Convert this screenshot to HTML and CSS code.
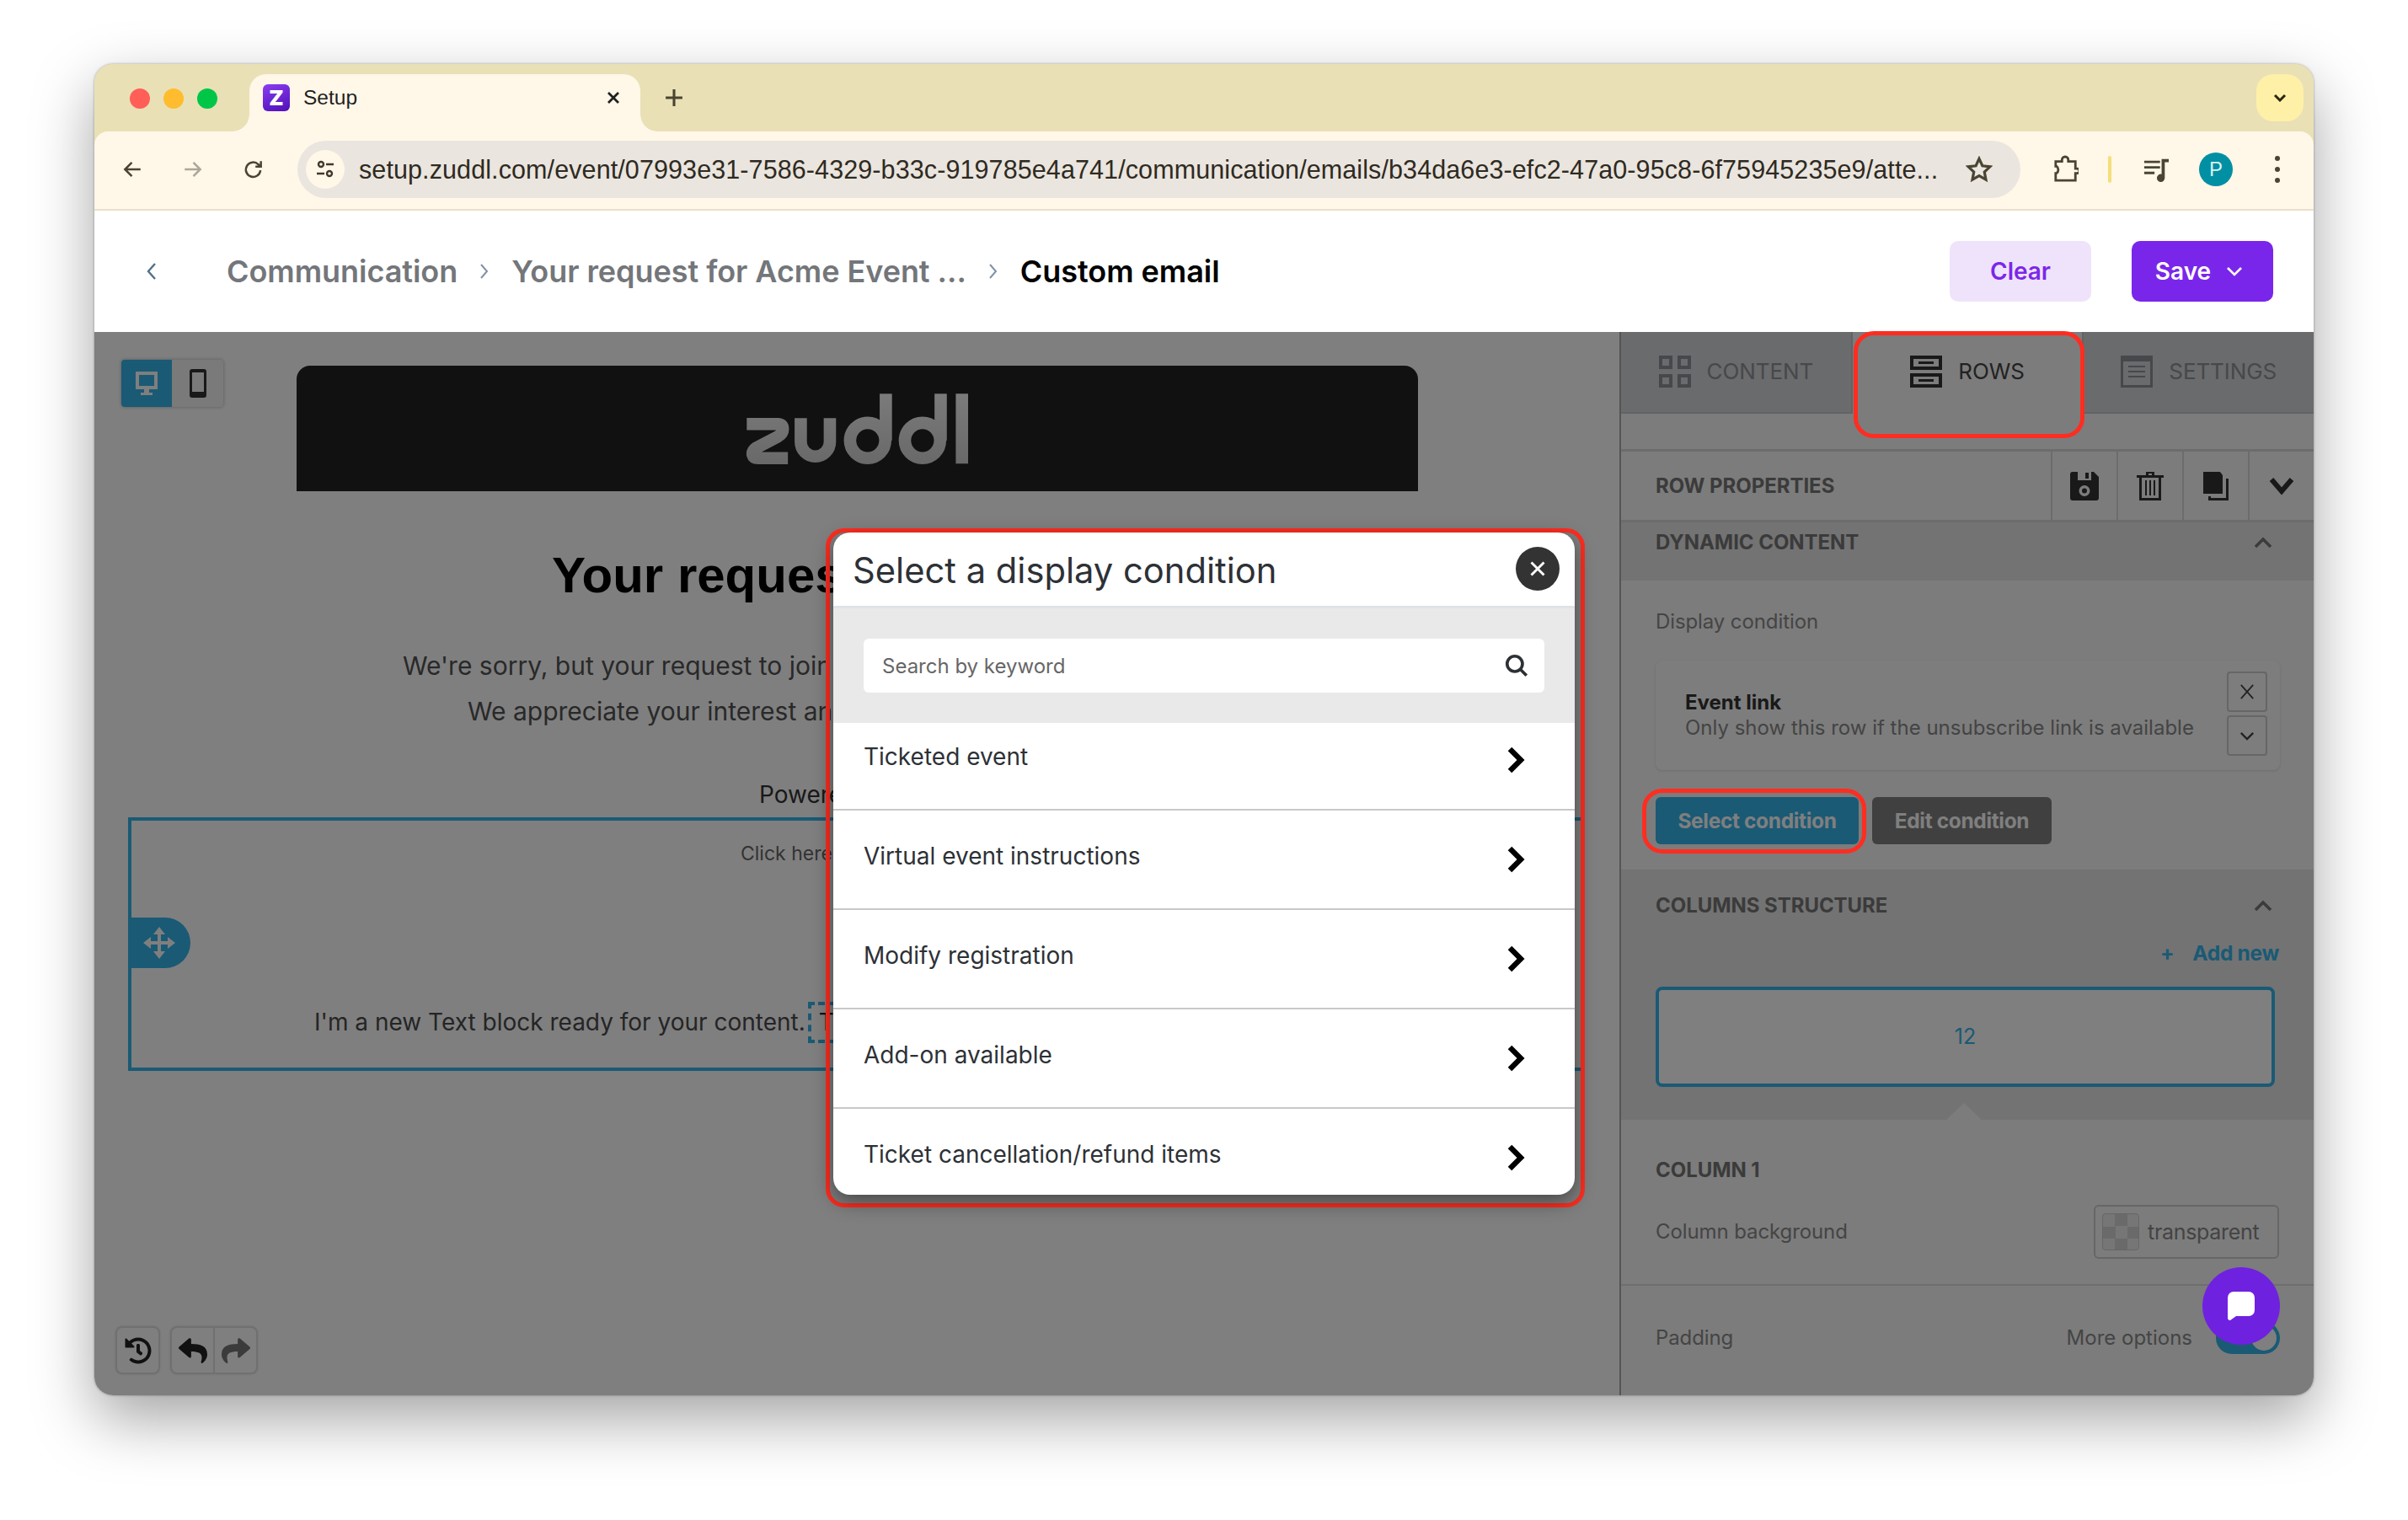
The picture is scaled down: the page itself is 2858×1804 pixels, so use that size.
FILE: index.html
```html
<!DOCTYPE html>
<html lang="en">
<head>
<meta charset="utf-8">
<title>Setup</title>
<link rel="stylesheet" href="styles.css">
</head>
<body>
<div class="window">
  <div class="tabstrip">
    <div class="lights"><i class="light red"></i><i class="light amber"></i><i class="light green"></i></div>
    <div class="tab">
      <span class="favicon">Z</span>
      <span class="tab-title">Setup</span>
      <svg class="tab-close" viewBox="0 0 16 16"><path d="M2 2l12 12M14 2L2 14"/></svg>
    </div>
    <svg class="new-tab" viewBox="0 0 20 20"><path d="M10 1v18M1 10h18"/></svg>
    <div class="tab-search"><svg viewBox="0 0 16 10"><path d="M2 2l6 6 6-6"/></svg></div>
  </div>
  <div class="toolbar">
    <svg class="nav-icon" viewBox="0 0 24 24"><path d="M21 12H4M11.500 4.500L4 12l7.500 7.500"/></svg>
    <svg class="nav-icon muted" viewBox="0 0 24 24"><path d="M3 12h17M12.500 4.500L20 12l-7.500 7.500"/></svg>
    <svg class="nav-icon" viewBox="0 0 24 24"><path d="M19.500 13a8 8 0 1 1-2.400-6.500L20 9M20 3v6h-6"/></svg>
    <div class="omnibox">
      <span class="site-btn"><svg viewBox="0 0 24 24"><circle cx="7" cy="6" r="3"/><path d="M13 6h9M2 17h9"/><circle cx="17" cy="17" r="3"/></svg></span>
      <span class="url">setup.zuddl.com/event/07993e31-7586-4329-b33c-919785e4a741/communication/emails/b34da6e3-efc2-47a0-95c8-6f75945235e9/atte...</span>
      <svg class="star" viewBox="0 0 24 24"><path d="M12 2.500l2.900 6.300 6.800.8-5 4.700 1.300 6.800-6-3.400-6 3.400 1.300-6.800-5-4.700 6.800-.8z"/></svg>
    </div>
    <svg class="ext-icon" viewBox="0 0 32 34"><path d="M3 7h8V5a4 4 0 0 1 8 0v2h9v9h2a3 3 0 0 1 0 6h-2v9H3v-9h1a5.500 5.500 0 0 0 0-9H3z"/></svg>
    <i class="tool-sep"></i>
    <svg class="queue-icon" viewBox="0 0 32 32"><path d="M1 5h20v3H1zM1 12h20v3H1zM1 19h13v3H1zM23 3h9v4h-5v20a5 5 0 1 1-4-5z"/></svg>
    <span class="avatar">P</span>
    <span class="kebab"><i></i><i></i><i></i></span>
  </div>
  <header class="pagebar">
    <svg class="crumb-back" viewBox="0 0 14 24"><path d="M11 3l-8 9 8 9"/></svg>
    <nav class="crumbs">
      <span class="crumb">Communication</span>
      <svg class="crumb-sep" viewBox="0 0 12 20"><path d="M2 2l7 8-7 8"/></svg>
      <span class="crumb">Your request for Acme Event ...</span>
      <svg class="crumb-sep" viewBox="0 0 12 20"><path d="M2 2l7 8-7 8"/></svg>
      <span class="crumb current">Custom email</span>
    </nav>
    <button class="btn-clear">Clear</button>
    <button class="btn-save">Save<svg viewBox="0 0 20 12"><path d="M2 2l8 8 8-8"/></svg></button>
  </header>

  <main class="editor">
    <section class="canvas">
      <div class="device-toggle">
        <span class="device on"><svg viewBox="0 0 32 32"><path d="M3 2h26v21H3zM7 6v13h18V6zM13 23h6v4h4v3H9v-3h4z" fill-rule="evenodd"/></svg></span>
        <span class="device"><svg viewBox="0 0 20 34"><path d="M3 0h14a3 3 0 0 1 3 3v28a3 3 0 0 1-3 3H3a3 3 0 0 1-3-3V3a3 3 0 0 1 3-3zM3 4v23h14V4z" fill-rule="evenodd"/></svg></span>
      </div>
      <div class="email-logo">
        <svg class="logo-mark" viewBox="63 65 817 277" role="img" aria-label="zuddl">
          <defs><linearGradient id="logoFade" gradientUnits="userSpaceOnUse" x1="0" y1="78" x2="0" y2="330"><stop offset="0" stop-color="#f6f6f6"/><stop offset="1" stop-color="#d2d2d2"/></linearGradient></defs>
          <g fill="none" stroke="url(#logoFade)" stroke-width="44">
            <path d="M75 186H186Q204 186 204 204Q204 220 186 231L108 272Q94 282 96 296Q99 308 116 308H222"/>
            <path d="M268 165V250A52 52 0 0 0 372 250V165"/>
            <circle cx="507" cy="245" r="63"/>
            <path d="M572 78V245"/>
            <circle cx="703" cy="245" r="63"/>
            <path d="M768 78V245"/>
            <path d="M844 78V328"/>
          </g>
        </svg>
      </div>
      <h1 class="email-title">Your request</h1>
      <p class="email-text line-a">We're sorry, but your request to join</p>
      <p class="email-text line-b">We appreciate your interest and</p>
      <p class="email-text line-c">Powered</p>
      <div class="selected-row">
        <span class="move-handle"><svg viewBox="0 0 40 40"><path d="M20 1l7 9h-5v8h8v-5l9 7-9 7v-5h-8v8h5l-7 9-7-9h5v-8h-8v5l-9-7 9-7v5h8v-8h-5z"/></svg></span>
        <p class="row-link">Click here</p>
        <p class="row-copy">I'm a new Text block ready for your content.<span class="dashed">Ti</span></p>
      </div>
      <div class="history-tools">
        <span class="tool-btn"><svg viewBox="0 0 512 512"><path d="M504 255.531c.253 136.64-111.18 248.372-247.82 248.468-59.015.042-113.223-20.53-155.822-54.911-11.077-8.94-11.905-25.541-1.839-35.607l11.267-11.267c8.609-8.609 22.353-9.551 31.891-1.984C173.062 425.135 212.781 440 256 440c101.705 0 184-82.311 184-184 0-101.705-82.311-184-184-184-48.814 0-93.149 18.969-126.068 49.932l50.754 50.754c10.08 10.08 2.941 27.314-11.313 27.314H24c-8.837 0-16-7.163-16-16V38.627c0-14.254 17.234-21.393 27.314-11.314l49.372 49.372C129.209 34.136 189.552 8 256 8c136.81 0 247.747 110.78 248 247.531zm-180.912 78.784l9.823-12.63c8.138-10.463 6.253-25.542-4.21-33.679L288 256.349V152c0-13.255-10.745-24-24-24h-16c-13.255 0-24 10.745-24 24v135.651l65.409 50.874c10.463 8.137 25.541 6.253 33.679-4.21z"/></svg></span>
        <span class="tool-group">
          <span class="tool-half"><svg viewBox="0 0 512 512"><path d="M8.309 189.836L184.313 37.851C199.719 24.546 224 35.347 224 56.015v80.053c160.629 1.839 288 34.032 288 186.258 0 61.441-39.581 122.309-83.333 154.132-13.653 9.931-33.111-2.533-28.077-18.631 45.344-145.012-21.507-183.51-176.59-185.742V360c0 20.7-24.3 31.453-39.687 18.164l-176.004-152c-11.071-9.562-11.086-26.753 0-36.328z"/></svg></span>
          <span class="tool-half dim"><svg viewBox="0 0 512 512"><path transform="matrix(-1 0 0 1 512 0)" d="M8.309 189.836L184.313 37.851C199.719 24.546 224 35.347 224 56.015v80.053c160.629 1.839 288 34.032 288 186.258 0 61.441-39.581 122.309-83.333 154.132-13.653 9.931-33.111-2.533-28.077-18.631 45.344-145.012-21.507-183.51-176.59-185.742V360c0 20.7-24.3 31.453-39.687 18.164l-176.004-152c-11.071-9.562-11.086-26.753 0-36.328z"/></svg></span>
        </span>
      </div>
    </section>

    <aside class="panel">
      <div class="panel-tabs">
        <div class="ptab">
          <svg viewBox="0 0 38 38"><path d="M0 0h16v16H0zM4 4v8h8V4zM22 0h16v16H22zM26 4v8h8V4zM0 22h16v16H0zM4 26v8h8v-8zM22 22h16v16H22zM26 26v8h8v-8z" fill-rule="evenodd"/></svg>
          <span>CONTENT</span>
        </div>
        <div class="ptab active">
          <svg viewBox="0 0 38 38"><path d="M0 0h38v17H0zM4 4v9h30V4zM0 21h38v17H0zM4 25v9h30v-9zM10 7h18v3H10zM10 28h18v3H10z" fill-rule="evenodd"/></svg>
          <span>ROWS</span>
        </div>
        <div class="ptab">
          <svg viewBox="0 0 38 38"><path d="M0 0h38v38H0zM3 7v28h32V7zM9 12h20v2H9zM9 18h20v2H9zM9 24h20v2H9z" fill-rule="evenodd"/></svg>
          <span>SETTINGS</span>
        </div>
      </div>
      <div class="props-bar">
        <span class="props-title">ROW PROPERTIES</span>
        <span class="prop-btn"><svg viewBox="0 0 34 34"><path d="M3 0h6v10h16V0h3l6 6v25a3 3 0 0 1-3 3H3a3 3 0 0 1-3-3V3a3 3 0 0 1 3-3zM17 16a6.500 6.500 0 1 0 0 13 6.500 6.500 0 0 0 0-13zm0 3.500a3 3 0 1 1 0 6 3 3 0 0 1 0-6zM18 1h4v7h-4z" fill-rule="evenodd"/></svg></span>
        <span class="prop-btn"><svg viewBox="0 0 34 34"><path d="M12 0h10v4h11v3h-3v27H4V7H1V4h11zM15 2v2h4V2zM7 7v24h20V7zM11 10h2v18h-2zM16 10h2v18h-2zM21 10h2v18h-2z" fill-rule="evenodd"/></svg></span>
        <span class="prop-btn"><svg viewBox="0 0 34 34"><path d="M2 0h20l3 4v22H2zM28 8h4v26H8v-5h3v2h18V8z"/></svg></span>
        <span class="prop-btn plain"><svg class="thick" viewBox="0 0 32 24"><path d="M4 4l12 14L28 4"/></svg></span>
      </div>
      <div class="band band-dynamic">
        <span class="band-title">DYNAMIC CONTENT</span>
        <svg class="band-chevron" viewBox="0 0 24 14"><path d="M3 12l9-9 9 9"/></svg>
      </div>
      <div class="dynamic-body">
        <p class="field-label">Display condition</p>
        <div class="condition-card">
          <div class="condition-text">
            <strong>Event link</strong>
            <span>Only show this row if the unsubscribe link is available</span>
          </div>
          <div class="condition-btns">
            <span class="mini-btn"><svg viewBox="0 0 20 24"><path d="M2 3l16 18M18 3L2 21"/></svg></span>
            <span class="mini-btn"><svg viewBox="0 0 20 12"><path d="M2 2l8 8 8-8"/></svg></span>
          </div>
        </div>
        <div class="condition-actions">
          <button class="btn-select">Select condition</button>
          <button class="btn-edit">Edit condition</button>
        </div>
      </div>
      <div class="band band-columns">
        <div class="band-head">
          <span class="band-title">COLUMNS STRUCTURE</span>
          <svg class="band-chevron" viewBox="0 0 24 14"><path d="M3 12l9-9 9 9"/></svg>
        </div>
        <div class="add-new"><span class="plus">+</span><span>Add new</span></div>
        <div class="col-box">12</div>
        <i class="col-notch"></i>
      </div>
      <div class="column-props">
        <p class="band-title col-title">COLUMN 1</p>
        <div class="prop-row">
          <span class="field-label">Column background</span>
          <span class="color-field"><i class="swatch"></i><span>transparent</span></span>
        </div>
      </div>
      <div class="padding-row">
        <span class="field-label">Padding</span>
        <span class="more-options">More options</span>
        <i class="switch"></i>
      </div>
    </aside>
    <div class="scrim"></div>
    <i class="mark mark-rows"></i>
    <i class="mark mark-select"></i>
    <i class="mark mark-modal"></i>
    <div class="modal">
      <div class="modal-head">
        <h2>Select a display condition</h2>
        <span class="modal-close"><svg viewBox="0 0 16 16"><path d="M3 3l10 10M13 3L3 13"/></svg></span>
      </div>
      <div class="modal-search">
        <div class="search-box">
          <span>Search by keyword</span>
          <svg viewBox="0 0 28 28"><circle cx="12" cy="12" r="8.500"/><path d="M18 18l7 7"/></svg>
        </div>
      </div>
      <ul class="modal-list">
        <li><span>Ticketed event</span><svg viewBox="0 0 22 32"><path d="M4 3l13 13L4 29"/></svg></li>
        <li><span>Virtual event instructions</span><svg viewBox="0 0 22 32"><path d="M4 3l13 13L4 29"/></svg></li>
        <li><span>Modify registration</span><svg viewBox="0 0 22 32"><path d="M4 3l13 13L4 29"/></svg></li>
        <li><span>Add-on available</span><svg viewBox="0 0 22 32"><path d="M4 3l13 13L4 29"/></svg></li>
        <li><span>Ticket cancellation/refund items</span><svg viewBox="0 0 22 32"><path d="M4 3l13 13L4 29"/></svg></li>
      </ul>
    </div>
    <span class="chat-bubble"><svg viewBox="0 0 34 36"><path d="M8 1h18a7 7 0 0 1 7 7v15a7 7 0 0 1-7 7H11l-7 5a3 3 0 0 1-3-3V8a7 7 0 0 1 7-7z"/></svg></span>
  </main>
</div>
</body>
</html>
```
FILE: styles.css
```css
* { box-sizing: border-box; }
html, body { margin: 0; background: #fff; }
body { padding: 76px 112px 148px; font-family: "Inter", "Liberation Sans", sans-serif; width: 2858px; height: 1804px; overflow: hidden; }
p, h1, h2, ul { margin: 0; padding: 0; }
button { font-family: inherit; border: 0; }
svg { display: block; flex: none; }
i { display: block; }

.window { position: relative; width: 2634px; height: 1580px; border-radius: 22px; overflow: hidden; background: #e9e0b6; box-shadow: 0 28px 72px rgba(0,0,0,.36), 0 0 3px rgba(0,0,0,.35); display: flex; flex-direction: column; }

/* browser chrome */
.tabstrip { height: 80px; background: #e9e0b6; display: flex; align-items: flex-start; padding-left: 42px; flex: none; }
.lights { display: flex; gap: 16px; margin-top: 29px; }
.light { width: 24px; height: 24px; border-radius: 50%; }
.red { background: #ff5f57; }
.amber { background: #febc2e; }
.green { background: #00c648; }
.tab { margin: 12px 0 0 38px; width: 464px; height: 68px; background: #fff7e8; border-radius: 20px 20px 0 0; display: flex; align-items: flex-start; padding: 12px 24px 0 16px; position: relative; }
.tab::before, .tab::after { content: ""; position: absolute; bottom: 0; width: 20px; height: 20px; background: radial-gradient(circle at 0 0, #e9e0b6 19.5px, #fff7e8 20px); }
.tab::before { left: -20px; }
.tab::after { right: -20px; background: radial-gradient(circle at 100% 0, #e9e0b6 19.5px, #fff7e8 20px); }
.favicon { width: 32px; height: 32px; border-radius: 6px; background: linear-gradient(160deg, #8b3df0, #4f0fb8); color: #fff; font: 900 25px/32px "Inter", sans-serif; text-align: center; }
.tab-title { margin-left: 16px; font: 400 24.500px/32px "Liberation Sans", sans-serif; color: #1f1f1f; flex: 1; }
.tab-close { width: 16px; height: 16px; margin-top: 8px; fill: none; stroke: #1f1f1f; stroke-width: 2.800; }
.new-tab { width: 22px; height: 22px; margin: 29px 0 0 29px; fill: none; stroke: #4a4432; stroke-width: 2.800; }
.tab-search { margin: 12px 0 0 auto; margin-right: 12px; width: 56px; height: 56px; border-radius: 20px; background: #fff0a8; display: flex; align-items: center; justify-content: center; }
.tab-search svg { width: 16px; height: 10px; fill: none; stroke: #2c2810; stroke-width: 3; }

.toolbar { height: 94px; background: #fff7e8; border-bottom: 2px solid #e9e0cb; display: flex; align-items: center; padding: 0 0 2px 32px; flex: none; border-radius: 16px 16px 0 0; position: relative; }
.nav-icon { width: 26px; height: 26px; margin-right: 46px; fill: none; stroke: #4a4432; stroke-width: 2.300; }
.nav-icon.muted { stroke: #aaa69a; }
.omnibox { margin-left: -7px; width: 2045px; height: 68px; border-radius: 34px; background: #eae5de; display: flex; align-items: center; padding: 0 0 0 10px; }
.site-btn { width: 46px; height: 46px; border-radius: 50%; background: #fff7e8; display: flex; align-items: center; justify-content: center; flex: none; }
.site-btn svg { width: 24px; height: 24px; fill: none; stroke: #3f3a2e; stroke-width: 2.400; }
.url { margin-left: 17px; width: 1900px; flex: none; font: 400 30.500px/40px "Liberation Sans", sans-serif; color: #2e2a22; white-space: nowrap; letter-spacing: .1px; }
.star { width: 32px; height: 32px; margin-left: 7px; fill: none; stroke: #4a4432; stroke-width: 2.400; }
.ext-icon { width: 30px; height: 34px; margin-left: 39px; fill: none; stroke: #4a4432; stroke-width: 3; }
.tool-sep { width: 4px; height: 32px; background: #f4df7b; margin-left: 35px; border-radius: 2px; }
.queue-icon { width: 30px; height: 32px; margin-left: 38px; fill: #4a4432; }
.avatar { width: 40px; height: 40px; border-radius: 50%; background: #008fa3; color: #d9f3f5; font: 400 24px/40px "Liberation Sans", sans-serif; text-align: center; margin-left: 36px; }
.kebab { display: flex; flex-direction: column; gap: 7px; margin-left: 50px; }
.kebab i { width: 6px; height: 6px; border-radius: 50%; background: #4a4432; }

.pagebar { height: 144px; background: #fff; display: flex; align-items: center; padding: 0 48px 0 61px; flex: none; }
.crumb-back { width: 14px; height: 24px; fill: none; stroke: #52708a; stroke-width: 2.400; }
.crumbs { display: flex; align-items: center; margin-left: 82px; flex: 1; }
.crumb { font-size: 36px; font-weight: 600; color: #73767a; letter-spacing: -.05px; white-space: nowrap; }
.crumb.current { color: #000; }
.crumb-sep { width: 12px; height: 20px; margin: 0 26px; fill: none; stroke: #7f92a6; stroke-width: 2; }
.btn-clear { width: 168px; height: 72px; border-radius: 10px; background: #efe3fc; color: #7c27e8; font-size: 28px; font-weight: 600; }
.btn-save { margin-left: 48px; width: 168px; height: 72px; border-radius: 10px; background: #7a26ea; color: #fff; font-size: 28px; font-weight: 600; display: flex; align-items: center; justify-content: center; gap: 18px; padding-right: 14px; }
.btn-save svg { width: 20px; height: 12px; fill: none; stroke: #fff; stroke-width: 2.600; }

/* editor */
.editor { position: relative; flex: 1; display: flex; min-height: 0; }
.scrim { position: absolute; inset: 0; background: rgba(0,0,0,.5); }
.canvas { position: relative; width: 1812px; flex: none; background: #fff; border-right: 2px solid #aaa; padding-top: 40px; }
.device-toggle { position: absolute; left: 32px; top: 33px; width: 121px; height: 56px; display: flex; border-radius: 4px; box-shadow: 0 0 4px rgba(0,0,0,.3); background: #f4f4f4; overflow: hidden; }
.device { flex: 1; display: flex; align-items: center; justify-content: center; fill: #333; }
.device.on { background: #34b4ea; fill: #fff; flex: 0 0 60px; }
.device.on svg { width: 32px; height: 32px; }
.device svg { width: 20px; height: 34px; }

.email-logo { margin-left: 240px; width: 1331px; height: 149px; background: #222; border-radius: 16px 16px 0 0; display: flex; align-items: center; justify-content: center; }
.logo-mark { width: 272px; height: 92px; }
.email-title { margin-top: 60px; padding-left: 543px; font: 700 60px/80px "Liberation Sans", sans-serif; color: #000; white-space: nowrap; }
.email-text { font-size: 30px; line-height: 54px; color: #525252; white-space: nowrap; }
.line-a { margin-top: 40px; padding-left: 366px; }
.line-b { padding-left: 443px; }
.line-c { margin-top: 45px; padding-left: 789px; font-size: 28px; color: #333; }
.selected-row { position: relative; margin: 0 0 0 40px; width: 1728px; height: 301px; border: 4px solid #34b4ea; }
.move-handle { position: absolute; left: -4px; top: 115px; width: 74px; height: 60px; border-radius: 0 30px 30px 0 / 0 30px 30px 0; background: #34b4ea; display: flex; align-items: center; justify-content: center; fill: #fff; }
.move-handle svg { width: 40px; height: 40px; }
.row-link { margin-top: 19px; line-height: 40px; padding-left: 723px; font-size: 23px; color: #666; white-space: nowrap; }
.row-copy { margin-top: 156px; padding-left: 217px; font-size: 28px; line-height: 41px; color: #4a4a4a; white-space: nowrap; }
.dashed { display: inline-block; margin-left: 3px; padding: 0 9px; border: 4px dashed #34b4ea; color: #222; line-height: 41px; width: 200px; }
.history-tools { position: absolute; left: 25px; top: 1180px; display: flex; gap: 12px; fill: #444; }
.tool-btn, .tool-group { height: 57px; border: 2px solid #e0e0e0; border-radius: 8px; display: flex; background: #fff; box-shadow: 0 0 3px rgba(0,0,0,.12); fill: #333; }
.tool-btn { width: 53px; align-items: center; justify-content: center; }
.tool-btn svg { width: 32px; height: 32px; fill: #222; }
.tool-group { width: 104px; }
.tool-half { flex: 1; display: flex; align-items: center; justify-content: center; }
.tool-half + .tool-half { border-left: 2px solid #e0e0e0; }
.tool-half svg { width: 34px; height: 34px; fill: #222; }
.tool-half.dim svg { fill: #777; }

/* side panel */
.panel { flex: 1; background: #f8f8f8; color: #666; display: flex; flex-direction: column; min-width: 0; }
.panel-tabs { display: flex; height: 139px; flex: none; }
.ptab { flex: 1; height: 97px; background: #d4d6da; border-bottom: 2px solid #c4c6ca; display: flex; align-items: flex-start; justify-content: center; gap: 19px; padding-top: 28px; font-size: 26px; color: #8f9196; fill: #8f9196; }
.ptab span { line-height: 38px; letter-spacing: -.1px; }
.ptab svg { width: 38px; height: 38px; }
.ptab.active { background: #f8f8f8; border-bottom: 0; color: #444; fill: #333; border-left: 2px solid #c4c6ca; border-right: 2px solid #c4c6ca; }
.props-bar { height: 87px; display: flex; flex: none; align-items: center; border-top: 3px solid #d8d8d8; border-bottom: 3px solid #d8d8d8; padding-left: 41px; }
.props-title { font-size: 24px; font-weight: 700; color: #777; flex: 1; letter-spacing: -.05px; }
.prop-btn { width: 78px; height: 100%; border-left: 2px solid #d8d8d8; display: flex; align-items: center; justify-content: center; fill: #333; }
.prop-btn svg { width: 34px; height: 34px; }
.prop-btn .thick { width: 32px; height: 24px; fill: none; stroke: #333; stroke-width: 6; }
.band { background: #e6e6e6; padding: 0 41px; flex: none; }
.band-dynamic { height: 69px; display: flex; justify-content: space-between; align-items: flex-start; padding-right: 48px; }
.band-title { font-size: 24px; font-weight: 700; color: #777; line-height: 48px; letter-spacing: -.05px; }
.band-chevron { width: 24px; height: 14px; margin-top: 17px; fill: none; stroke: #777; stroke-width: 3.600; }
.dynamic-body { height: 343px; flex: none; padding: 30px 41px 0; }
.field-label { font-size: 24px; line-height: 38px; color: #8a8a8a; white-space: nowrap; letter-spacing: -.1px; }
.condition-card { margin-top: 27px; width: 741px; height: 130px; border-radius: 8px; background: #fafafa; box-shadow: 0 1px 3px rgba(0,0,0,.12); display: flex; padding: 13px 15px 0 35px; }
.condition-text { flex: 1; display: flex; flex-direction: column; padding-top: 22px; font-size: 24px; line-height: 30px; color: #888; white-space: nowrap; }
.condition-text strong { color: #333; font-weight: 700; }
.condition-btns { display: flex; flex-direction: column; gap: 4px; }
.mini-btn { width: 48px; height: 48px; border: 2px solid #ccc; border-radius: 4px; display: flex; align-items: center; justify-content: center; }
.mini-btn svg { width: 18px; height: 22px; fill: none; stroke: #444; stroke-width: 2; }
.mini-btn + .mini-btn svg { width: 18px; height: 11px; stroke-width: 2.600; }
.condition-actions { display: flex; gap: 16px; margin-top: 32px; }
.btn-select, .btn-edit { height: 56px; border-radius: 6px; font-size: 24.500px; font-weight: 700; color: #fff; letter-spacing: -.35px; }
.btn-select { width: 241px; background: #34b4ea; }
.btn-edit { width: 213px; background: #808080; }
.band-columns { position: relative; height: 297px; }
.band-head { display: flex; justify-content: space-between; padding: 19px 7px 0 0; }
.add-new { display: flex; justify-content: flex-end; gap: 22px; color: #34b4ea; font-size: 24.500px; font-weight: 700; line-height: 36px; margin-top: 14px; letter-spacing: -.3px; }
.col-box { margin-top: 22px; width: 735px; height: 119px; border: 4px solid #34b4ea; border-radius: 8px; background: #fff; color: #34b4ea; text-align: center; font-size: 25px; line-height: 111px; }
.col-notch { position: absolute; left: 386px; bottom: 0; width: 0; height: 0; border-left: 21px solid transparent; border-right: 21px solid transparent; border-bottom: 20px solid #f8f8f8; }
.column-props { height: 197px; flex: none; padding: 36px 41px 0; border-bottom: 2px solid #dcdcdc; }
.col-title { display: block; }
.prop-row { display: flex; justify-content: space-between; align-items: center; margin-top: 17px; }
.color-field { width: 220px; height: 64px; border: 2px solid #ccc; border-radius: 6px; display: flex; align-items: center; padding-left: 8px; gap: 10px; font-size: 25px; color: #888; letter-spacing: -.3px; }
.swatch { width: 44px; height: 44px; border-radius: 4px; background: repeating-conic-gradient(#d4d4d4 0 25%, #ececec 0 50%) 0 0 / 29px 29px; border: 1px solid #ccc; }
.padding-row { flex: 1; display: flex; align-items: flex-start; padding: 43px 40px 0 41px; }
.padding-row .field-label { flex: 1; }
.more-options { font-size: 24px; line-height: 38px; color: #8a8a8a; }
.switch { position: relative; width: 76px; height: 38px; margin-left: 28px; border-radius: 19px; background: #34b4ea; }
.switch::after { content: ""; position: absolute; right: 4px; top: 4px; width: 30px; height: 30px; border-radius: 50%; background: #fff; }

/* annotations and modal */
.mark { position: absolute; border: 5px solid #ff2d20; border-radius: 24px; }
.mark-rows { left: 2088px; top: -1px; width: 274px; height: 127px; }
.mark-select { left: 1837px; top: 542px; width: 266px; height: 77px; }
.mark-modal { left: 868px; top: 233px; width: 901px; height: 806px; border-radius: 22px; }
.modal { position: absolute; left: 877px; top: 238px; width: 880px; height: 786px; background: #fff; border-radius: 20px; overflow: hidden; box-shadow: 0 8px 24px rgba(0,0,0,.45); display: flex; flex-direction: column; }
.modal-head { height: 90px; flex: none; border-bottom: 3px solid #dfe3e6; display: flex; align-items: center; justify-content: space-between; padding: 0 18px 0 23px; }
.modal-head h2 { font-size: 41.700px; font-weight: 400; line-height: 50px; color: #2d3136; margin-top: 2px; }
.modal-close { width: 52px; height: 52px; border-radius: 50%; background: #333; display: flex; align-items: center; justify-content: center; margin-top: -2px; }
.modal-close svg { width: 24px; height: 24px; fill: none; stroke: #fff; stroke-width: 1.900; }
.modal-search { height: 136px; flex: none; background: #e9e9e9; padding: 36px 36px 0; }
.search-box { height: 64px; background: #fff; border-radius: 6px; display: flex; align-items: center; justify-content: space-between; padding: 0 18px 0 22px; font-size: 24px; color: #666; }
.search-box svg { width: 30px; height: 30px; fill: none; stroke: #2d3136; stroke-width: 3.400; }
.modal-list { list-style: none; flex: 1; display: flex; flex-direction: column; }
.modal-list li { height: 118px; flex: none; padding: 34px 59px 0 36px; border-bottom: 2px solid #c8c8c8; display: flex; justify-content: space-between; align-items: flex-start; font-size: 28px; line-height: 40px; color: #2d3136; }
.modal-list li:first-child { height: 104px; padding-top: 20px; }
.modal-list li:last-child { border-bottom: 0; }
.modal-list svg { width: 22px; height: 32px; margin: 8px 0 0; fill: none; stroke: #000; stroke-width: 6.400; }
.chat-bubble { position: absolute; left: 2502px; top: 1110px; width: 92px; height: 92px; border-radius: 50%; background: #6f21e0; display: flex; align-items: center; justify-content: center; fill: #fff; }
.chat-bubble svg { width: 34px; height: 36px; }
```
